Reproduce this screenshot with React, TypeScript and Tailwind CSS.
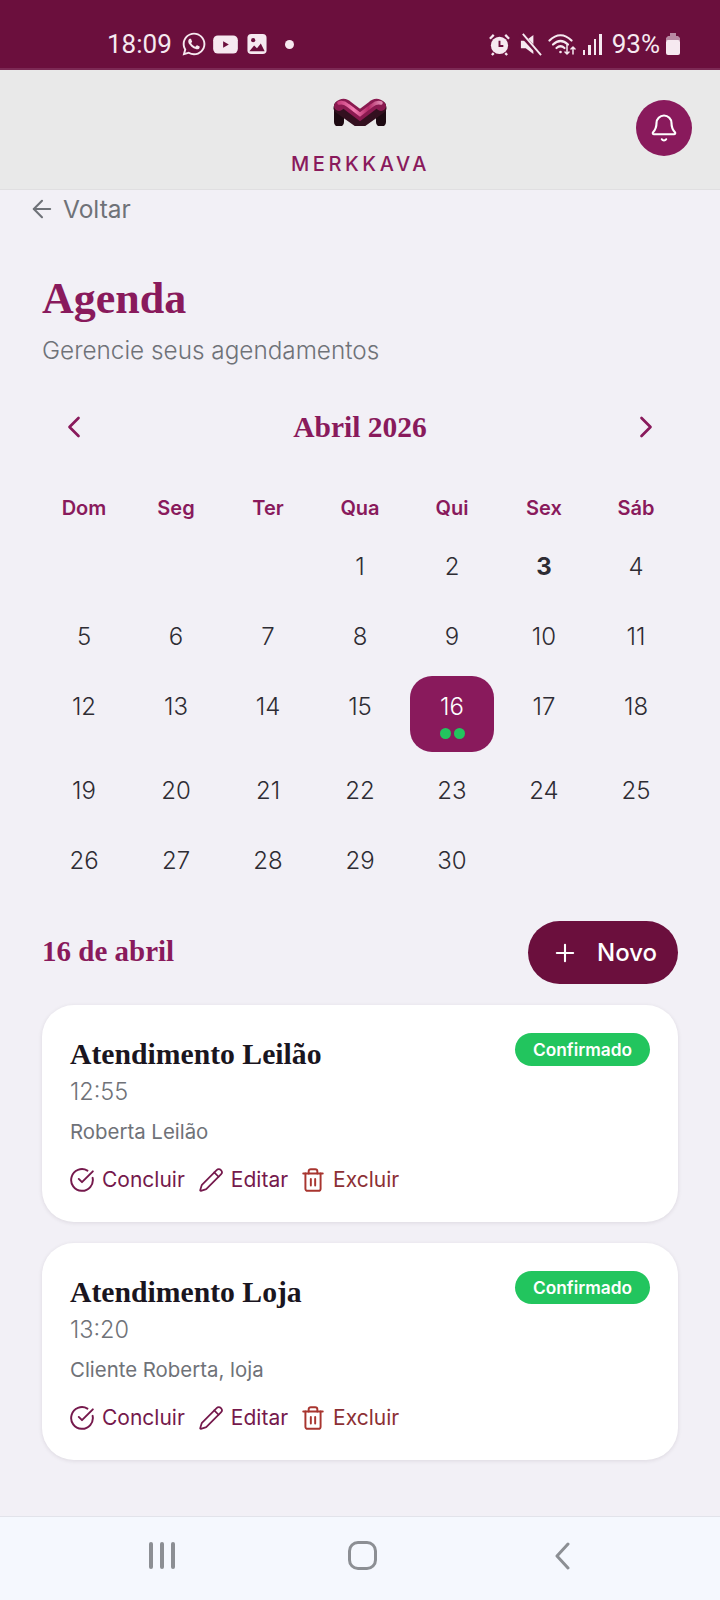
import { ArrowLeft, Bell, ChevronLeft, ChevronRight, CircleCheckBig, Pencil, Plus, Trash2 } from "lucide-react";
import { FaWhatsapp } from "react-icons/fa";

const sans = "font-['Inter','Noto_Sans',sans-serif]";
const serif = "font-['Liberation_Serif',serif]";

const weekDays = ["Dom", "Seg", "Ter", "Qua", "Qui", "Sex", "Sáb"];
const days: (number | null)[] = [null, null, null, 1, 2, 3, 4];
for (let d = 5; d <= 30; d++) days.push(d);

const appointments = [
  { title: "Atendimento Leilão", time: "12:55", client: "Roberta Leilão" },
  { title: "Atendimento Loja", time: "13:20", client: "Cliente Roberta, loja" },
];

function StatusBar() {
  return (
    <div className="flex h-[70px] shrink-0 items-end justify-between border-b-2 border-[#7c2a55] bg-[#6b0f3d] pb-[7px] pl-[107px] pr-[40px] font-['Roboto',sans-serif] text-[#f6e9f0]">
      <div className="flex items-center">
        <span className="text-[26px] leading-[34px]">18:09</span>
        <FaWhatsapp className="ml-[9px] h-[26px] w-[26px]" />
        <svg viewBox="0 0 26 20" className="ml-[6px] h-[19px] w-[25px]">
          <rect width="26" height="19" y="0.5" rx="5" fill="currentColor" />
          <path d="M10.5 6.500l6 3.500-6 3.500z" fill="#6b0f3d" />
        </svg>
        <svg viewBox="0 0 20 22" className="ml-[9px] h-[21px] w-[20px]">
          <rect width="20" height="21" rx="4" fill="currentColor" />
          <circle cx="6" cy="6.500" r="2.200" fill="#6b0f3d" />
          <path d="M2 18l5-6 3 3 4-5 4 8z" fill="#6b0f3d" />
        </svg>
        <span className="ml-[18px] h-[9px] w-[9px] rounded-full bg-current" />
      </div>
      <div className="flex items-center">
        <svg viewBox="0 0 24 24" className="h-[23px] w-[23px]">
          <circle cx="12" cy="13" r="9" fill="currentColor" />
          <path d="M12 8v5.500h4" fill="none" stroke="#6b0f3d" strokeWidth="2" />
          <path d="M2 6l4-4M22 6l-4-4M6 21l-2 2M18 21l2 2" stroke="currentColor" strokeWidth="2.400" />
        </svg>
        <svg viewBox="0 0 24 24" className="ml-[8px] h-[23px] w-[23px]">
          <path d="M2 8h5l8-6v20l-8-6H2z" fill="currentColor" />
          <path d="M2 1l20 22" stroke="#6b0f3d" strokeWidth="4.500" />
          <path d="M4 1l19 22" stroke="currentColor" strokeWidth="2" />
        </svg>
        <svg viewBox="0 0 28 24" fill="none" stroke="currentColor" strokeLinecap="round" className="ml-[6px] h-[24px] w-[28px]">
          <path d="M1.500 8.500c7-7 15-7 22 0" strokeWidth="2.200" />
          <path d="M5 12.500c4.800-4.500 10.200-4.500 15 0" strokeWidth="2.200" />
          <path d="M8.500 16c2.500-2.200 5.500-2.200 8 0" strokeWidth="2.200" />
          <circle cx="12.500" cy="20" r="1.300" fill="currentColor" stroke="none" />
          <path d="M19 13v9M17 20l2 2 2-2M25 22v-7M23 17l2-2 2 2" strokeWidth="1.500" />
        </svg>
        <div className="ml-[7px] flex h-[22px] items-end gap-[3px]">
          <span className="h-[5px] w-[2.500px] bg-current" />
          <span className="h-[10px] w-[2.500px] bg-current" />
          <span className="h-[16px] w-[2.500px] bg-current" />
          <span className="h-[21px] w-[2.500px] bg-current" />
        </div>
        <span className="ml-[10px] text-[26px] leading-[34px]">93%</span>
        <svg viewBox="0 0 14 22" className="ml-[6px] h-[22px] w-[14px]">
          <path d="M4 0h6v3H4z" fill="#b98aa4" />
          <path d="M2 3h10l2 2v3H0V5z" fill="#b98aa4" />
          <rect y="7" width="14" height="15" rx="2" fill="currentColor" />
        </svg>
      </div>
    </div>
  );
}

function Logo() {
  return (
    <svg viewBox="0 0 54 28" className="h-[28px] w-[54px]">
      <defs>
        <linearGradient id="logoTop" x1="0" y1="0" x2="1" y2="0">
          <stop offset="0" stopColor="#c93f7e" />
          <stop offset="0.35" stopColor="#f47fb4" />
          <stop offset="0.7" stopColor="#b52a68" />
          <stop offset="1" stopColor="#e08ab2" />
        </linearGradient>
      </defs>
      <path d="M6 8v16M48 8v16" stroke="#1d0a12" strokeWidth="10" strokeLinecap="round" fill="none" />
      <path d="M6 7l21 15 21-15" stroke="#33101f" strokeWidth="11" strokeLinejoin="round" strokeLinecap="round" fill="none" transform="translate(0 3)" />
      <path d="M6 8c3-3 6-3 9 0l12 9 12-9c3-3 6-3 9 0" stroke="#8a1a50" strokeWidth="10" strokeLinecap="round" fill="none" />
      <path d="M6 5c3-1 6 0 9 2.500l12 9 12-9c3-2.500 6-3.500 9-2.500" stroke="url(#logoTop)" strokeWidth="3.500" strokeLinecap="round" fill="none" />
    </svg>
  );
}

function Header() {
  return (
    <header className="grid h-[120px] shrink-0 grid-cols-[1fr_auto_1fr] border-b border-[#e0dfe1] bg-[#e9e9e9]">
      <div />
      <div className="flex flex-col items-center pt-[28px]">
        <Logo />
        <span className={`mt-[25px] pl-[1px] text-[20px] font-medium leading-[26px] tracking-[3.600px] text-[#891a5c] ${sans}`}>MERKKAVA</span>
      </div>
      <div className="flex justify-end pr-[28px] pt-[30px]">
        <button className="flex h-[56px] w-[56px] items-center justify-center rounded-full bg-[#891a5c] text-white">
          <Bell className="h-[30px] w-[30px]" strokeWidth={1.700} />
        </button>
      </div>
    </header>
  );
}

function Calendar() {
  return (
    <section className="mt-[40px]">
      <div className="flex items-center justify-between px-[14px]">
        <ChevronLeft className="h-[36px] w-[36px] text-[#891a5c]" strokeWidth={1.800} />
        <h2 className={`text-[29.500px] font-bold leading-[40px] text-[#891a5c] ${serif}`}>Abril 2026</h2>
        <ChevronRight className="h-[36px] w-[36px] text-[#891a5c]" strokeWidth={1.800} />
      </div>
      <div className="mt-[47px] grid grid-cols-7 gap-x-[8px]">
        {weekDays.map((d) => (
          <span key={d} className="text-center text-[20px] font-semibold leading-[28px] text-[#891a5c]">{d}</span>
        ))}
      </div>
      <div className="mt-[14px] grid grid-cols-7 gap-[8px]">
        {days.map((d, i) => {
          if (d === null) return <div key={i} className="h-[62px]" />;
          if (d === 16) {
            return (
              <div key={i} className="flex h-[76px] flex-col items-center rounded-[22px] bg-[#891a5c] pt-[17px] text-[24px] font-light leading-[28px] text-white">
                {d}
                <div className="mt-[7px] flex gap-[3px]">
                  <span className="h-[11px] w-[11px] rounded-full bg-[#22c55e]" />
                  <span className="h-[11px] w-[11px] rounded-full bg-[#22c55e]" />
                </div>
              </div>
            );
          }
          return (
            <div key={i} className={`h-[62px] pt-[17px] text-center text-[24px] leading-[28px] text-[#2e2c33] ${d === 3 ? "font-bold" : "font-light"}`}>
              {d}
            </div>
          );
        })}
      </div>
    </section>
  );
}

function AppointmentCard({ title, time, client }: { title: string; time: string; client: string }) {
  return (
    <article className="h-[217px] rounded-[32px] bg-white px-[28px] pt-[29px] shadow-[0_1px_4px_rgba(40,20,40,0.1)]">
      <div className="flex items-start justify-between">
        <h3 className={`text-[29.700px] font-bold leading-[40px] text-[#1a1520] ${serif}`}>{title}</h3>
        <span className="-mt-[1px] flex h-[33px] w-[135px] items-center justify-center rounded-full bg-[#22c55e] text-[17.300px] font-semibold text-white">Confirmado</span>
      </div>
      <p className="mt-[2px] text-[23.500px] font-light leading-[32px] text-[#6f7278]">{time}</p>
      <p className="mt-[10px] text-[20.400px] leading-[28px] text-[#6f7278]">{client}</p>
      <div className="-ml-[1px] mt-[19px] flex items-center text-[21px] leading-[30px]">
        <span className="flex items-center gap-[7px] text-[#75194c]">
          <CircleCheckBig className="h-[26px] w-[26px]" strokeWidth={1.800} />
          Concluir
        </span>
        <span className="ml-[13px] flex items-center gap-[7px] text-[#75194c]">
          <Pencil className="h-[26px] w-[26px]" strokeWidth={1.600} />
          Editar
        </span>
        <span className="ml-[12px] flex items-center gap-[7px] text-[#8c3034]">
          <Trash2 className="h-[26px] w-[26px] text-[#a8352f]" strokeWidth={1.800} />
          Excluir
        </span>
      </div>
    </article>
  );
}

function NavBar() {
  return (
    <nav className="flex h-[84px] shrink-0 items-center justify-center gap-[176px] border-t border-[#e2e3ea] bg-[#f5f8fe] pb-[6px] pr-[2px]">
      <div className="-mr-[3px] flex gap-[7px]">
        <span className="h-[27px] w-[4px] rounded-full bg-[#8c8f94]" />
        <span className="h-[27px] w-[4px] rounded-full bg-[#8c8f94]" />
        <span className="h-[27px] w-[4px] rounded-full bg-[#8c8f94]" />
      </div>
      <div className="h-[29px] w-[29px] rounded-[10px] border-[3px] border-[#8c8f94]" />
      <svg viewBox="0 0 16 28" className="ml-[1px] h-[28px] w-[16px]" fill="none" stroke="#8c8f94" strokeWidth="3" strokeLinecap="round" strokeLinejoin="round">
        <path d="M14 2L3 14l11 12" />
      </svg>
    </nav>
  );
}

export default function App() {
  return (
    <div className={`flex h-[1600px] w-[720px] flex-col overflow-hidden bg-[#f2f0f6] ${sans}`}>
      <StatusBar />
      <Header />
      <main className="min-h-0 flex-1 px-[42px]">
        <a className="-ml-[14px] mt-[3px] flex items-center gap-[7px] text-[24.500px] leading-[32px] text-[#6f7278]">
          <ArrowLeft className="h-[28px] w-[28px]" strokeWidth={1.800} />
          Voltar
        </a>
        <h1 className={`mt-[43px] text-[44px] font-bold leading-[62px] text-[#891a5c] ${serif}`}>Agenda</h1>
        <p className="mt-[3px] text-[24.300px] font-light leading-[34px] text-[#6f7278]">Gerencie seus agendamentos</p>
        <Calendar />
        <div className="mt-[29px] flex items-center justify-between">
          <h2 className={`pb-[3px] text-[29px] font-bold leading-[40px] text-[#891a5c] ${serif}`}>16 de abril</h2>
          <button className="flex h-[63px] w-[150px] items-center justify-center gap-[18px] rounded-full bg-[#6b0f3d] pl-[2px] text-[24px] font-medium text-white">
            <Plus className="h-[28px] w-[28px]" strokeWidth={1.800} />
            Novo
          </button>
        </div>
        <div className="mt-[21px] flex flex-col gap-[21px]">
          {appointments.map((a) => (
            <AppointmentCard key={a.title} {...a} />
          ))}
        </div>
      </main>
      <NavBar />
    </div>
  );
}
